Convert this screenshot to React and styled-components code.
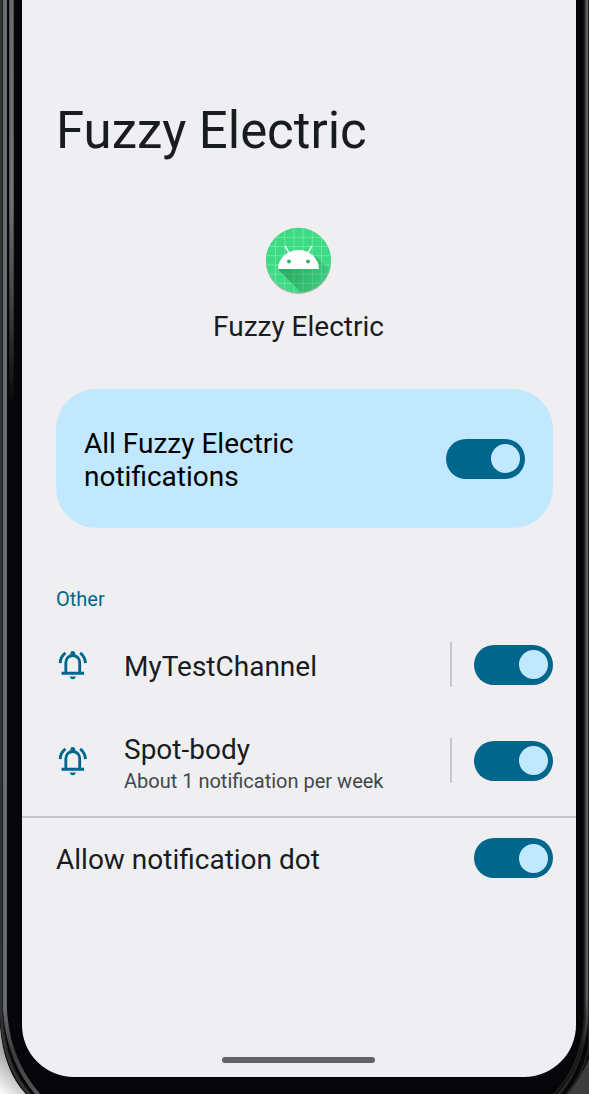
import React from "react";
import styled, { createGlobalStyle } from "styled-components";

const Global = createGlobalStyle`
  * { box-sizing: border-box; }
  html, body, #root { margin: 0; height: 100%; }
  body { overflow: hidden; font-family: Roboto, "Liberation Sans", sans-serif; color: #191c1e; background: #fff; }
`;

const Backdrop = styled.main`
  height: 1094px;
  width: 589px;
  position: relative;
  overflow: hidden;
  background: linear-gradient(90deg, #fff 0%, #fff 50%, #3d3d3d 50%);
`;

const FrameArt = styled.svg`
  position: absolute;
  inset: 0;
`;

const Screen = styled.div`
  position: relative;
  display: flex;
  flex-direction: column;
  width: 554px;
  height: 1077px;
  margin-left: 22px;
  padding: 100px 23px 0 34px;
  background: #efeff2;
  border-radius: 0 0 52px 52px;
`;

const Title = styled.h1`
  margin: 0;
  font-size: 50.9px;
  line-height: 62px;
  font-weight: 400;
  white-space: nowrap;
`;

const AppHeader = styled.header`
  display: flex;
  flex-direction: column;
  align-items: center;
  margin: 63px 12px 0 0;
`;

const AppName = styled.div`
  margin-top: 15px;
  font-size: 28px;
  line-height: 34px;
`;

const MainCard = styled.section`
  display: flex;
  align-items: center;
  justify-content: space-between;
  height: 139px;
  margin-top: 45px;
  padding: 0 28px;
  border-radius: 40px;
  background: #c2e8ff;
  color: #000;
`;

const CardLabel = styled.div`
  padding-top: 3px;
  font-size: 28px;
  line-height: 33px;
`;

const Track = styled.span`
  display: flex;
  flex: none;
  align-items: center;
  justify-content: flex-end;
  width: 79px;
  height: 40px;
  padding-right: 5px;
  border-radius: 20px;
  background: #00668b;
`;

const Thumb = styled.span`
  width: 29px;
  height: 29px;
  border-radius: 50%;
  background: #c2e8ff;
`;

const SectionLabel = styled.h2`
  margin: 59px 0 0;
  font-size: 20px;
  line-height: 24px;
  font-weight: 400;
  color: #00668b;
`;

const ChannelRow = styled.div`
  display: flex;
  align-items: center;
  height: ${(p) => p.$height}px;
`;

const ChannelText = styled.div`
  flex: 1;
  margin-left: 34px;
  padding-top: 5px;
`;

const Label = styled.div`
  font-size: 28px;
  line-height: 34px;
  white-space: nowrap;
`;

const Detail = styled.div`
  margin-top: 2px;
  font-size: 20px;
  line-height: 24px;
  color: #41484d;
`;

const Divider = styled.span`
  width: 2px;
  height: 45px;
  margin-right: 22px;
  background: #c6c7ca;
`;

const Rule = styled.hr`
  width: 554px;
  height: 2px;
  margin: 13px 0 0 -34px;
  border: 0;
  flex: none;
  background: #c6c6c9;
`;

const DotRow = styled.div`
  display: flex;
  align-items: center;
  justify-content: space-between;
  height: 80px;

  ${Label} {
    padding-top: 3px;
  }
`;

const HomeBar = styled.div`
  width: 153px;
  height: 6px;
  margin: auto 0 14px 166px;
  border-radius: 3px;
  background: #626264;
`;

const Switch = () => (
  <Track role="switch" aria-checked="true">
    <Thumb />
  </Track>
);

const BellIcon = () => (
  <svg width="34" height="34" viewBox="0.15 0.2 24 24" fill="none" stroke="#00668b" strokeWidth="2">
    <path d="M7.100 18V10.500C7.100 7.600 9.200 5.500 12 5.500S16.900 7.600 16.900 10.500V18M4 18H20" />
    <path d="M3.050 10.900C3.200 8 4.400 5.600 6.800 3.700M20.950 10.900C20.800 8 19.600 5.600 17.200 3.700" />
    <circle cx="12" cy="4.100" r="1.700" fill="#00668b" stroke="none" />
    <path d="M9.900 20.300H14.100C14 21.400 13.100 22.200 12 22.200S10 21.400 9.900 20.300Z" fill="#00668b" stroke="none" />
  </svg>
);

const gridLines = [-23, -13.8, -4.6, 4.6, 13.8, 23];

const AppIcon = () => (
  <svg width="70" height="70" viewBox="-34.5 -35.3 70 70">
    <defs>
      <clipPath id="disc"><circle r="32.5" /></clipPath>
      <linearGradient id="cast" x1="-16" y1="6" x2="28" y2="28" gradientUnits="userSpaceOnUse">
        <stop offset="0" stopColor="#1d7a48" stopOpacity="0.55" />
        <stop offset="1" stopColor="#1d7a48" stopOpacity="0.12" />
      </linearGradient>
    </defs>
    <circle cy="1.2" r="32.6" fill="#777" opacity="0.5" />
    <circle r="32.5" fill="#3ddc84" />
    <g clipPath="url(#disc)">
      {gridLines.map((p) => (
        <path key={p} d={`M${p} -34V34M-34 ${p}H34`} stroke="#fff" strokeOpacity="0.24" strokeWidth="1" />
      ))}
      <path d="M-20.500 9L4 33.500H40V18L17-4Z" fill="url(#cast)" />
    </g>
    <path d="M-20.500 8.700a20.500 19 0 0 1 41 0z" fill="#fff" />
    <path d="M-13.200-14l4 7M13.200-14l-4 7" stroke="#fff" strokeWidth="1.5" strokeLinecap="round" />
    <circle cx="-9.500" cy="1.200" r="1.900" fill="#35ad6b" />
    <circle cx="9.500" cy="1.200" r="1.900" fill="#35ad6b" />
  </svg>
);

const PhoneFrame = () => (
  <FrameArt width="589" height="1094" viewBox="0 0 589 1094" fill="none">
    <defs>
      <linearGradient id="innerEdge" x1="0" y1="0" x2="0" y2="400" gradientUnits="userSpaceOnUse">
        <stop offset="0" stopColor="#6a6967" />
        <stop offset="0.5" stopColor="#73726f" />
        <stop offset="0.75" stopColor="#444443" />
        <stop offset="1" stopColor="#0a090b" />
      </linearGradient>
      <linearGradient id="leftRail" x1="0" y1="0" x2="0" y2="1094" gradientUnits="userSpaceOnUse">
        <stop offset="0" stopColor="#686b72" />
        <stop offset="0.92" stopColor="#686b6e" />
        <stop offset="0.96" stopColor="#3b3c3e" />
        <stop offset="1" stopColor="#555658" />
      </linearGradient>
      <linearGradient id="rightRail" x1="0" y1="0" x2="0" y2="1094" gradientUnits="userSpaceOnUse">
        <stop offset="0" stopColor="#626264" />
        <stop offset="0.91" stopColor="#606062" />
        <stop offset="0.96" stopColor="#1b1b1c" />
        <stop offset="1" stopColor="#29292a" />
      </linearGradient>
      <linearGradient id="shade" x1="0" y1="1094" x2="22" y2="1072" gradientUnits="userSpaceOnUse">
        <stop stopColor="#fff" />
        <stop offset="1" stopColor="#aaa" />
      </linearGradient>
    </defs>
    <path d="M0 1020H40V1094H0Z" fill="url(#shade)" />
    <path d="M0-5H600V1010Q596 1066 562 1098H30Q4 1075 0 1026Z" fill="#060508" />
    <path d="M1.500-5V1015Q3 1068 31 1096" stroke="#343435" strokeWidth="3" />
    <path d="M5-5V1010Q8 1062 41 1098" stroke="url(#leftRail)" strokeWidth="4" />
    <path d="M2.500-5V1014Q5 1066 34 1097" stroke="#1d1d1f" strokeWidth="1" />
    <path d="M11.500 0V400" stroke="url(#innerEdge)" strokeWidth="4.500" />
    <path d="M584.500-5V1018Q581 1070 550 1098" stroke="#242425" strokeWidth="1.500" />
    <path d="M587-5V1018Q583 1070 555 1098" stroke="url(#rightRail)" strokeWidth="3" />
    <path d="M589-5V1045Q585 1074 563 1098" stroke="#202021" strokeWidth="2" />
  </FrameArt>
);

export default function App() {
  return (
    <>
      <Global />
      <Backdrop>
        <PhoneFrame />
        <Screen>
          <Title>Fuzzy Electric</Title>
          <AppHeader>
            <AppIcon />
            <AppName>Fuzzy Electric</AppName>
          </AppHeader>
          <MainCard>
            <CardLabel>All Fuzzy Electric<br />notifications</CardLabel>
            <Switch />
          </MainCard>
          <SectionLabel>Other</SectionLabel>
          <ChannelRow $height={107}>
            <BellIcon />
            <ChannelText><Label>MyTestChannel</Label></ChannelText>
            <Divider />
            <Switch />
          </ChannelRow>
          <ChannelRow $height={85}>
            <BellIcon />
            <ChannelText>
              <Label>Spot-body</Label>
              <Detail>About 1 notification per week</Detail>
            </ChannelText>
            <Divider />
            <Switch />
          </ChannelRow>
          <Rule />
          <DotRow>
            <Label>Allow notification dot</Label>
            <Switch />
          </DotRow>
          <HomeBar />
        </Screen>
      </Backdrop>
    </>
  );
}
